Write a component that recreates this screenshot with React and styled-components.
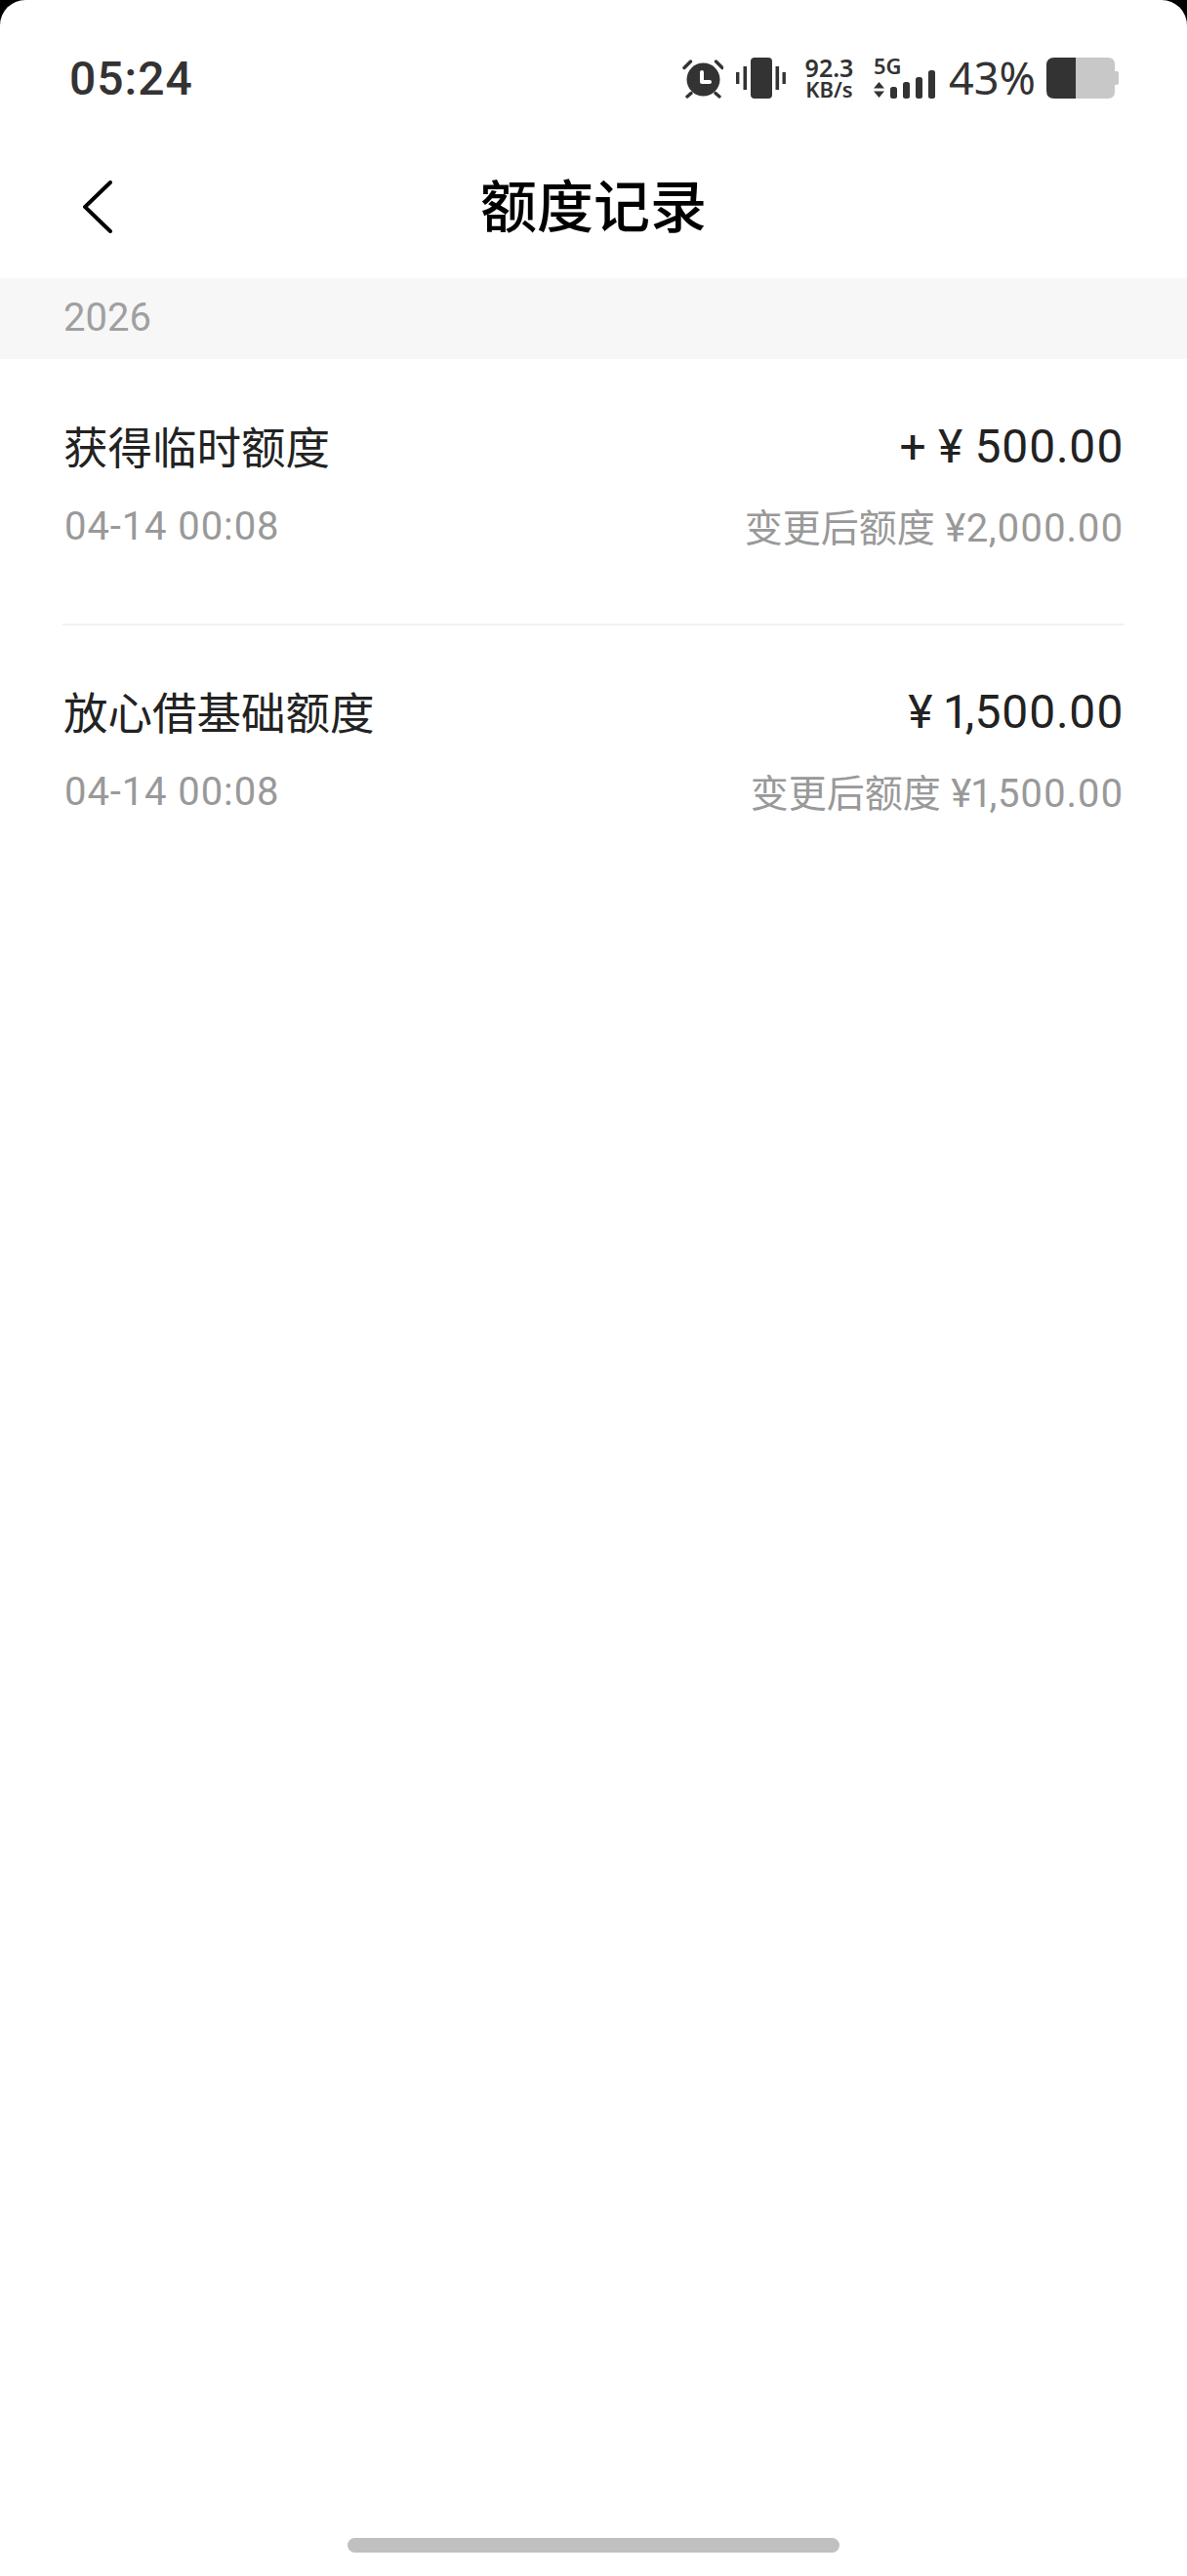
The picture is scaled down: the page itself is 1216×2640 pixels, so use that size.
import styled, { createGlobalStyle } from "styled-components"

const GlobalStyle = createGlobalStyle`
  html, body {
    margin: 0;
    padding: 0;
    background: #000;
  }
  body {
    font-family: Roboto, "Noto Sans CJK SC", sans-serif;
  }
`

const records = [
  { title: "获得临时额度", date: "04-14 00:08", amount: "+ ¥ 500.00", after: "¥2,000.00" },
  { title: "放心借基础额度", date: "04-14 00:08", amount: "¥ 1,500.00", after: "¥1,500.00" },
]

function AlarmIcon() {
  return (
    <svg width="42" height="42" viewBox="0 0 42 42">
      <circle cx="21.5" cy="22.5" r="17" fill="#333" />
      <path d="M2 10.5 L8.5 4 M41 10.5 L34.5 4" stroke="#333" strokeWidth="3.4" strokeLinecap="round" />
      <path d="M5 40 L9 36.5 M38 40 L34 36.5" stroke="#333" strokeWidth="3.4" strokeLinecap="round" />
      <path d="M20 15 V25 H28" fill="none" stroke="#fff" strokeWidth="4" strokeLinecap="round" strokeLinejoin="round" />
    </svg>
  )
}

function VibrateIcon() {
  return (
    <svg width="51" height="42" viewBox="0 0 51 42">
      <rect x="15" y="0" width="22" height="42" rx="4" fill="#333" />
      <rect x="0" y="15" width="3.4" height="12" fill="#333" />
      <rect x="7.5" y="9" width="3.6" height="24" fill="#333" />
      <rect x="40.5" y="9" width="3.6" height="24" fill="#333" />
      <rect x="47.5" y="15" width="3.4" height="12" fill="#333" />
    </svg>
  )
}

function SignalIcon() {
  return (
    <svg width="63" height="29" viewBox="0 0 63 29">
      <path d="M5.5 12 L11 18.5 H0 Z M5.5 28 L11 21.5 H0 Z" fill="#333" />
      <rect x="17" y="17" width="7" height="12" rx="2.5" fill="#333" />
      <rect x="30" y="12" width="7" height="17" rx="2.5" fill="#333" />
      <rect x="43" y="7" width="7" height="22" rx="2.5" fill="#333" />
      <rect x="56" y="0" width="7" height="29" rx="2.5" fill="#333" />
    </svg>
  )
}

function BatteryIcon() {
  return (
    <svg width="74" height="42" viewBox="0 0 74 42">
      <path d="M30 0 H63 Q70 0 70 7 V35 Q70 42 63 42 H30 Z" fill="#c8c8c8" />
      <path d="M70 14 H72 Q74 14 74 16 V26 Q74 28 72 28 H70 Z" fill="#c8c8c8" />
      <path d="M30 0 H8 Q0 0 0 8 V34 Q0 42 8 42 H30 Z" fill="#333" />
    </svg>
  )
}

function BackIcon() {
  return (
    <svg width="30" height="54" viewBox="0 0 30 54">
      <path d="M28 2 L2 27 L28 52" fill="none" stroke="#000" strokeWidth="4" strokeLinecap="round" strokeLinejoin="miter" />
    </svg>
  )
}

export default function App() {
  return (
    <Screen>
      <GlobalStyle />
      <StatusBar>
        <Time>05:24</Time>
        <StatusIcons>
          <AlarmIcon />
          <VibrateIcon />
          <Speed>
            <SpeedValue>92.3</SpeedValue>
            <SpeedUnit>KB/s</SpeedUnit>
          </Speed>
          <Network>
            <NetworkLabel>5G</NetworkLabel>
            <SignalIcon />
          </Network>
          <Percent>43%</Percent>
          <BatteryIcon />
        </StatusIcons>
      </StatusBar>

      <NavBar>
        <BackButton>
          <BackIcon />
        </BackButton>
        <NavTitle>额度记录</NavTitle>
      </NavBar>

      <YearBand>2026</YearBand>

      <List>
        {records.map((r) => (
          <Row key={r.title}>
            <Line>
              <RowTitle>{r.title}</RowTitle>
              <Amount>{r.amount}</Amount>
            </Line>
            <SubLine>
              <Muted>{r.date}</Muted>
              <AfterText>
                <AfterLabel>变更后额度</AfterLabel> {r.after}
              </AfterText>
            </SubLine>
          </Row>
        ))}
      </List>

      <HomeBar />
    </Screen>
  )
}

const Screen = styled.div`
  display: flex;
  flex-direction: column;
  height: 2640px;
  background: #fff;
  border-radius: 26px 26px 0 0;
  overflow: hidden;
`

const StatusBar = styled.div`
  display: flex;
  justify-content: space-between;
  align-items: center;
  height: 42px;
  padding: 59px 70px 0 71px;
`

const Time = styled.div`
  font-size: 48px;
  font-weight: 500;
  color: #333;
  letter-spacing: 1px;
`

const StatusIcons = styled.div`
  display: flex;
  align-items: center;
  gap: 13px;
`

const Speed = styled.div`
  display: flex;
  flex-direction: column;
  align-items: center;
  width: 51px;
  margin-left: 6px;
  font-family: "Noto Sans", sans-serif;
  font-weight: 600;
  color: #333;
`

const SpeedValue = styled.div`
  font-size: 25px;
  line-height: 21px;
`

const SpeedUnit = styled.div`
  padding-top: 1px;
  font-size: 22px;
  line-height: 21px;
`

const Network = styled.div`
  display: flex;
  flex-direction: column;
  margin-left: 7px;
`

const NetworkLabel = styled.div`
  height: 13px;
  font-family: "Noto Sans", sans-serif;
  font-size: 22px;
  font-weight: 600;
  line-height: 16px;
  color: #333;
`

const Percent = styled.div`
  width: 87px;
  margin-left: 1px;
  font-family: "Noto Sans", sans-serif;
  font-size: 45px;
  line-height: 42px;
  text-align: right;
  white-space: nowrap;
  color: #333;
`

const NavBar = styled.div`
  display: grid;
  grid-template-columns: 1fr auto 1fr;
  align-items: center;
  height: 148px;
  padding-top: 36px;
`

const BackButton = styled.div`
  display: flex;
  padding: 2px 0 0 85px;
`

const NavTitle = styled.div`
  margin-bottom: 6px;
  font-family: "Noto Sans CJK SC", sans-serif;
  font-size: 58px;
  font-weight: 500;
  color: #000;
`

const YearBand = styled.div`
  display: flex;
  align-items: center;
  height: 81px;
  padding: 0 0 2px 65px;
  background: #f7f7f7;
  font-size: 40px;
  color: #a0a0a0;
`

const List = styled.div`
  flex: 1;
  display: flex;
  flex-direction: column;
  padding: 1px 64px 0;
`

const Row = styled.div`
  display: flex;
  flex-direction: column;
  gap: 28px;
  height: 272px;
  box-sizing: border-box;
  padding-top: 57px;
  &:not(:last-child) {
    border-bottom: 2px solid #f2f2f2;
  }
`

const Line = styled.div`
  display: flex;
  justify-content: space-between;
  align-items: center;
  height: 60px;
`

const SubLine = styled(Line)`
  height: 50px;
  padding: 0 1px 0 2px;
`

const RowTitle = styled.div`
  padding-left: 1px;
  font-size: 45.5px;
  color: #222;
`

const Amount = styled.div`
  padding: 2px 1px 0 0;
  font-size: 48px;
  letter-spacing: 0.2px;
  font-variant-numeric: proportional-nums;
  color: #222;
`

const Muted = styled.div`
  font-size: 40px;
  letter-spacing: 0.9px;
  color: #999;
`

const AfterText = styled(Muted)`
  padding-bottom: 3px;
  letter-spacing: 0.5px;
  font-variant-numeric: proportional-nums;
`

const AfterLabel = styled.span`
  font-size: 39px;
  letter-spacing: 0;
`

const HomeBar = styled.div`
  align-self: center;
  width: 504px;
  height: 15px;
  margin-bottom: 24px;
  border-radius: 8px;
  background: #c0c0c0;
`
